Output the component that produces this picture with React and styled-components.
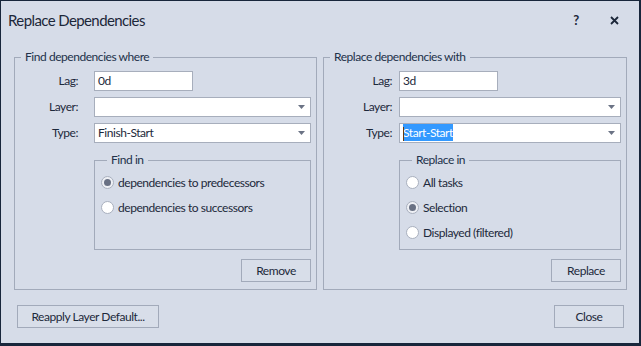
import React from "react";
import styled, { createGlobalStyle } from "styled-components";

const GlobalStyle = createGlobalStyle`
  html, body { margin: 0; padding: 0; background: #18263b; }
  body { font-family: Lato, "Noto Sans", sans-serif; }
  #root { width: 641px; height: 346px; overflow: hidden; }
`;

const Window = styled.div`
  width: 638px;
  height: 342px;
  margin: 1px 0 0 1px;
  background: #d6dce8;
  color: #1d293b;
  font-size: 12px;
  letter-spacing: -0.45px;
  display: flex;
  flex-direction: column;
`;

const TitleBar = styled.div`
  height: 38px;
  display: flex;
  align-items: center;
  padding: 0 6px 0 7px;
`;

const Title = styled.div`
  flex: 1;
  font-size: 15px;
  letter-spacing: -0.6px;
  color: #1c2739;
`;

const TitleButton = styled.div`
  width: 38px;
  height: 30px;
  display: flex;
  align-items: center;
  justify-content: center;
  font-weight: bold;
  font-size: 13px;
  color: #1c2739;
`;

const Columns = styled.div`
  display: grid;
  grid-template-columns: 303px 304px;
  column-gap: 6px;
  padding: 10px 0 0 13px;
`;

const Group = styled.fieldset`
  margin: 0;
  min-width: 0;
  border: 1px solid #a2aaba;
  padding: 0 5px 7px 0;
  display: grid;
  grid-template-columns: ${(p) => p.$labelW}px 1fr;
  column-gap: ${(p) => p.$gap}px;
  row-gap: 6px;
  align-content: start;
`;

const Legend = styled.legend`
  margin-left: 6px;
  padding: 0 4px;
  line-height: 16px;
  color: #22314a;
`;

const Label = styled.label`
  text-align: right;
  align-self: center;
  line-height: 16px;
`;

const FirstLabel = styled(Label)`
  margin-top: 6px;
`;

const Field = styled.div`
  box-sizing: border-box;
  height: 20px;
  width: ${(p) => (p.$w ? `${p.$w}px` : "auto")};
  justify-self: ${(p) => (p.$w ? "start" : "stretch")};
  margin-top: ${(p) => p.$mt || 0}px;
  background: #ffffff;
  border: 1px solid #a7aebc;
  display: flex;
  align-items: center;
  padding: 0 5px 0 3px;
  line-height: 16px;
`;

const FieldText = styled.span`
  flex: 1;
  white-space: nowrap;
`;

const Selected = styled.span`
  background: #3399ff;
  color: #ffffff;
  padding: 1px 0;
`;

const Caret = styled.span`
  display: inline-block;
  width: 1px;
  height: 14px;
  vertical-align: middle;
  background: #6a3a10;
  margin-right: -1px;
  position: relative;
  z-index: 1;
`;

const Arrow = () => (
  <svg width="7" height="4" viewBox="0 0 7 4">
    <path d="M0 0 H7 L3.5 4 Z" fill="#6b7385" />
  </svg>
);

const SubGroup = styled.fieldset`
  grid-column: 2;
  margin: 3px 0 0 0;
  min-width: 0;
  border: 1px solid #a2aaba;
  padding: 4px 0 7px 6px;
`;

const RadioList = styled.div`
  display: flex;
  flex-direction: column;
  gap: 5px;
  min-height: 70px;
`;

const RadioRow = styled.div`
  height: 20px;
  display: flex;
  align-items: center;
  gap: 4px;
  white-space: nowrap;
`;

const RadioCircle = styled.span`
  box-sizing: border-box;
  width: 13px;
  height: 13px;
  border-radius: 50%;
  border: 1px solid #a9b0be;
  background: ${(p) => (p.$on ? "#eef0f5" : "#ffffff")};
  display: flex;
  align-items: center;
  justify-content: center;
  &::after {
    content: "";
    width: 7px;
    height: 7px;
    border-radius: 50%;
    background: #697184;
    display: ${(p) => (p.$on ? "block" : "none")};
  }
`;

const Button = styled.div`
  box-sizing: border-box;
  height: 23px;
  width: ${(p) => p.$w}px;
  border: 1px solid #a2aaba;
  background: #d8dee9;
  display: flex;
  align-items: center;
  justify-content: center;
  line-height: 16px;
`;

const GroupButton = styled(Button)`
  grid-column: 2;
  justify-self: end;
  margin-top: 3px;
`;

const Footer = styled.div`
  display: flex;
  justify-content: space-between;
  padding: 15px 15px 0 16px;
`;

const Radio = ({ on, children }) => (
  <RadioRow>
    <RadioCircle $on={on} />
    {children}
  </RadioRow>
);

export default function App() {
  return (
    <>
      <GlobalStyle />
      <Window>
        <TitleBar>
          <Title>Replace Dependencies</Title>
          <TitleButton>?</TitleButton>
          <TitleButton>
            <svg width="9" height="9" viewBox="0 0 9 9">
              <path d="M1 1 L8 8 M8 1 L1 8" stroke="#1c2739" strokeWidth="1.8" />
            </svg>
          </TitleButton>
        </TitleBar>
        <Columns>
          <Group $labelW={63} $gap={16}>
            <Legend>Find dependencies where</Legend>
            <FirstLabel>Lag:</FirstLabel>
            <Field $w={99} $mt={6}>
              <FieldText>0d</FieldText>
            </Field>
            <Label>Layer:</Label>
            <Field>
              <FieldText />
              <Arrow />
            </Field>
            <Label>Type:</Label>
            <Field>
              <FieldText>Finish-Start</FieldText>
              <Arrow />
            </Field>
            <SubGroup>
              <Legend>Find in</Legend>
              <RadioList>
                <Radio on>dependencies to predecessors</Radio>
                <Radio>dependencies to successors</Radio>
              </RadioList>
            </SubGroup>
            <GroupButton $w={70}>Remove</GroupButton>
          </Group>
          <Group $labelW={68} $gap={7}>
            <Legend>Replace dependencies with</Legend>
            <FirstLabel>Lag:</FirstLabel>
            <Field $w={99} $mt={6}>
              <FieldText>3d</FieldText>
            </Field>
            <Label>Layer:</Label>
            <Field>
              <FieldText />
              <Arrow />
            </Field>
            <Label>Type:</Label>
            <Field>
              <FieldText>
                <Caret />
                <Selected>Start-Start</Selected>
              </FieldText>
              <Arrow />
            </Field>
            <SubGroup>
              <Legend>Replace in</Legend>
              <RadioList>
                <Radio>All tasks</Radio>
                <Radio on>Selection</Radio>
                <Radio>Displayed (filtered)</Radio>
              </RadioList>
            </SubGroup>
            <GroupButton $w={70}>Replace</GroupButton>
          </Group>
        </Columns>
        <Footer>
          <Button $w={142}>Reapply Layer Default...</Button>
          <Button $w={70}>Close</Button>
        </Footer>
      </Window>
    </>
  );
}
